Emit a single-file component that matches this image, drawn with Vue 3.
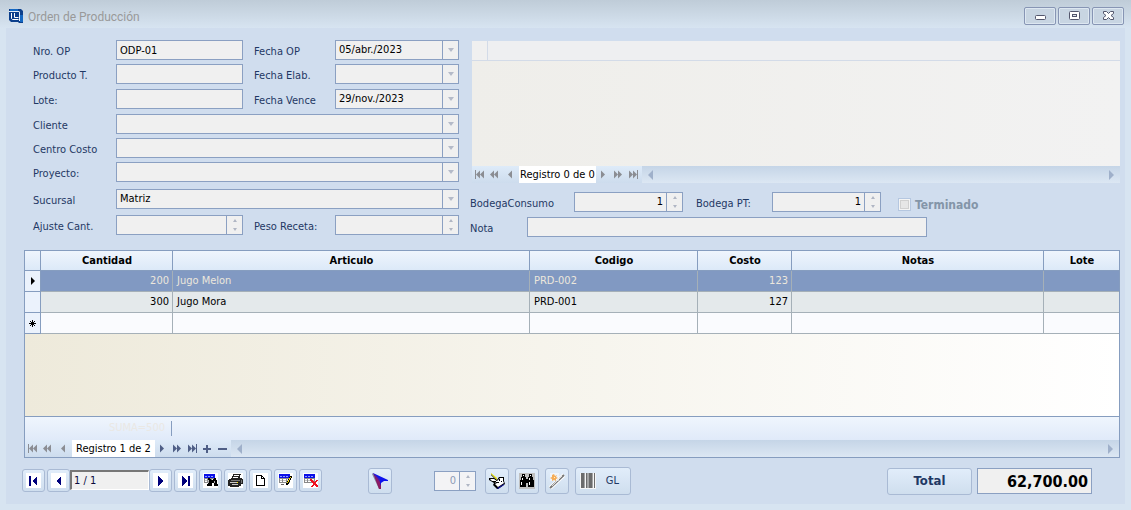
<script setup>
import { ref } from 'vue'

const order = ref({
  number: 'ODP-01',
  product: '',
  lot: '',
  date: '05/abr./2023',
  madeOn: '',
  expires: '29/nov./2023',
  client: '',
  costCenter: '',
  project: '',
  branch: 'Matriz',
  adjust: '',
  weight: '',
  stockOut: '1',
  stockIn: '1',
  note: '',
  position: '1 / 1',
  copies: '0',
  total: '62,700.00'
})

const fields = [
  { key: 'number', label: 'Nro. OP', type: 'text' },
  { key: 'date', label: 'Fecha OP', type: 'combo' },
  { key: 'product', label: 'Producto T.', type: 'text' },
  { key: 'madeOn', label: 'Fecha Elab.', type: 'combo' },
  { key: 'lot', label: 'Lote:', type: 'text' },
  { key: 'expires', label: 'Fecha Vence', type: 'combo' },
  { key: 'client', label: 'Cliente', type: 'combo', wide: true },
  { key: 'costCenter', label: 'Centro Costo', type: 'combo', wide: true },
  { key: 'project', label: 'Proyecto:', type: 'combo', wide: true },
  { key: 'branch', label: 'Sucursal', type: 'combo', wide: true },
  { key: 'adjust', label: 'Ajuste Cant.', type: 'spin' },
  { key: 'weight', label: 'Peso Receta:', type: 'spin' }
]

const rows = [
  { qty: 200, name: 'Jugo Melon', code: 'PRD-002', cost: 123 },
  { qty: 300, name: 'Jugo Mora', code: 'PRD-001', cost: 127 }
]

const navBefore = [
  { name: 'Primero', d: 'M0 0h1v9h-1zM1 4.5l4-4v8zM5 4.5l4-4v8z' },
  { name: 'Página anterior', d: 'M0 4.5l4-4v8zM4 4.5l4-4v8z' },
  { name: 'Anterior', d: 'M3 4.5l4-4v8z' }
]
const navAfter = [
  { name: 'Siguiente', d: 'M6 4.5l-4-4v8z' },
  { name: 'Página siguiente', d: 'M4 4.5l-4-4v8zM8 4.5l-4-4v8z' },
  { name: 'Último', d: 'M4 4.5l-4-4v8zM8 4.5l-4-4v8zM8 0h1v9h-1z' }
]
const navEdit = [
  { name: 'Agregar', d: 'M3 1h2v3h3v2h-3v3h-2v-3h-3v-2h3z' },
  { name: 'Quitar', d: 'M0 4h9v2h-9z' }
]

const navy = '#00007c'
const sheet = [
  { c: '#0a10e8', d: 'M1 1h11v4h-11z' },
  { c: '#8fa0ff', d: 'M2 3h2v1h-2zM5 3h2v1h-2zM8 3h2v1h-2z' },
  { c: '#8a8a8a', d: 'M1 5h11v1h-11zM1 6h1v3h-1zM4 6h1v3h-1zM8 6h1v3h-1zM11 6h1v3h-1zM1 9h11v1h-11z' },
  { c: '#c4c4c4', d: 'M2 7h2v1h-2zM5 7h3v1h-3zM9 7h2v1h-2z' }
]
const moves = [
  { name: 'Primer registro', parts: [{ c: navy, d: 'M3 3h2v10h-2zM11 3v10l-5-5z' }] },
  { name: 'Registro anterior', parts: [{ c: navy, d: 'M10 3v10l-5-5z' }] }
]
const tools = [
  { name: 'Registro siguiente', parts: [{ c: navy, d: 'M5 3v10l6-5z' }] },
  { name: 'Último registro', parts: [{ c: navy, d: 'M4 3v10l5-5zM10 3h2v10h-2z' }] },
  {
    name: 'Buscar',
    parts: [
      ...sheet,
      { c: '#000', d: 'M5 5h2v1h1v1h2v-1h1v-1h2v2h1v4h1v2h-4v-3h-2v3h-5v-2h1v-3h1z' },
      { c: '#aaa', d: 'M5 8h1v2h-1zM11 8h1v2h-1z' }
    ]
  },
  {
    name: 'Imprimir',
    parts: [
      { c: '#222', d: 'M5 1h8v1h-1v3h2v1h1v5h-2v2h-2v1h-9v-1h-2v-6h1v-1h2v-1h1v-2h1z' },
      { c: '#fff', d: 'M6 2h5v1h-5zM5 4h5v1h-5z' },
      { c: '#777', d: 'M3 7h9v1h-9zM13 7h1v3h-1z' },
      { c: '#c8c8c8', d: 'M2 9h8v1h-8zM4 11h6v1h-6z' },
      { c: '#ffe600', d: 'M9 9h1v1h-1z' }
    ]
  },
  {
    name: 'Nuevo',
    parts: [
      { c: '#000', d: 'M3 2h6v1h1v1h1v1h1v8h-9z' },
      { c: '#fff', d: 'M4 3h4v3h3v6h-7zM9 4h1v1h-1z' }
    ]
  },
  {
    name: 'Editar',
    parts: [
      ...sheet,
      { c: '#000', d: 'M12 3h2v2h-1v2h-1v2h-1v2h-1v1h-2v-2h1v-2h1v-2h1v-2h1z' },
      { c: '#f5d800', d: 'M12 4h1v1h-1v2h-1v2h-1v1h-1v-1h1v-2h1v-2h1z' },
      { c: '#666', d: 'M3 11h3v1h-3z' }
    ]
  },
  {
    name: 'Eliminar',
    parts: [
      ...sheet,
      { c: '#f01020', d: 'M7 6h2v1h1v1h1v1h1v-1h1v-1h2v1h-1v1h-1v2h1v1h1v2h-2v-1h-1v-1h-1v1h-1v1h-2v-1h1v-1h1v-2h-1v-1h-1z' }
    ]
  }
]
</script>

<template>
  <main class="window">
    <header class="titlebar">
      <svg class="logo" viewBox="0 0 14 14" aria-hidden="true">
        <path fill="#0c3f8c" d="M0 0h12l2 2v12h-4l-1-1h-7l-2-2z" />
        <path fill="#1467c2" d="M1 0h8v3h-8zM11 6h3v7h-3z" />
        <path fill="#e4eef8" d="M0 3h10v9h1v-9l-1-1h-10z" />
        <path fill="none" stroke="#fff" d="M2.500 4v5.500l1 1h6M5.500 4v4.500h4" />
      </svg>
      <h1>Orden de Producción</h1>
      <div class="window-buttons">
        <button type="button" aria-label="Minimizar">
          <svg viewBox="0 0 13 10"><rect x="1.500" y="4.500" width="10" height="4" rx="1" fill="#fff" stroke="#53566c" /></svg>
        </button>
        <button type="button" aria-label="Maximizar">
          <svg viewBox="0 0 13 10"><rect x="1.500" y=".5" width="10" height="8" rx="1" fill="#fff" stroke="#53566c" /><rect x="4.500" y="3.500" width="4" height="2" fill="#dfe6ee" stroke="#53566c" /></svg>
        </button>
        <button type="button" aria-label="Cerrar">
          <svg viewBox="0 0 13 10"><path fill="#fff" stroke="#53566c" d="M1.500 .5h3l2 2 2-2h3v2l-2.500 2 2.500 2v2h-3l-2-2-2 2h-3v-2l2.500-2-2.500-2z" /></svg>
        </button>
      </div>
    </header>

    <section class="panel">
      <div class="top">
        <form class="fields" @submit.prevent>
          <template v-for="f in fields" :key="f.key">
            <label :for="f.key">{{ f.label }}</label>
            <input v-if="f.type === 'text'" :id="f.key" v-model="order[f.key]" class="box" type="text" />
            <div v-else-if="f.type === 'combo'" class="box combo" :class="{ wide: f.wide }">
              <select :id="f.key" v-model="order[f.key]">
                <option>{{ order[f.key] }}</option>
              </select>
              <span class="drop"></span>
            </div>
            <div v-else class="box spin">
              <input :id="f.key" v-model="order[f.key]" type="text" />
              <span class="steps">
                <button type="button" class="up" aria-label="Aumentar"></button>
                <button type="button" class="down" aria-label="Disminuir"></button>
              </span>
            </div>
          </template>
        </form>

        <div class="side">
          <div class="preview">
            <div class="preview-head"></div>
            <div class="preview-body"></div>
            <div class="navigator">
              <div class="nav-buttons muted">
                <button v-for="b in navBefore" :key="b.name" type="button" :aria-label="b.name">
                  <svg viewBox="0 0 9 9"><path :d="b.d" /></svg>
                </button>
              </div>
              <span class="record">Registro 0 de 0</span>
              <div class="nav-buttons muted">
                <button v-for="b in navAfter" :key="b.name" type="button" :aria-label="b.name">
                  <svg viewBox="0 0 9 9"><path :d="b.d" /></svg>
                </button>
              </div>
              <div class="track"><i class="left"></i><i class="right"></i></div>
            </div>
          </div>

          <div class="stock">
            <label for="stockOut">BodegaConsumo</label>
            <div class="box spin number">
              <input id="stockOut" v-model="order.stockOut" type="text" />
              <span class="steps">
                <button type="button" class="up" aria-label="Aumentar"></button>
                <button type="button" class="down" aria-label="Disminuir"></button>
              </span>
            </div>
            <label class="second" for="stockIn">Bodega PT:</label>
            <div class="box spin number">
              <input id="stockIn" v-model="order.stockIn" type="text" />
              <span class="steps">
                <button type="button" class="up" aria-label="Aumentar"></button>
                <button type="button" class="down" aria-label="Disminuir"></button>
              </span>
            </div>
            <label class="done"><input type="checkbox" disabled />Terminado</label>
          </div>
          <div class="note">
            <label for="note">Nota</label>
            <input id="note" v-model="order.note" class="box" type="text" />
          </div>
        </div>
      </div>

      <div class="grid">
        <table>
          <colgroup>
            <col class="c-mark" /><col class="c-qty" /><col class="c-name" /><col class="c-code" />
            <col class="c-cost" /><col class="c-notes" /><col class="c-lot" />
          </colgroup>
          <thead>
            <tr>
              <th></th><th>Cantidad</th><th>Articulo</th><th>Codigo</th><th>Costo</th><th>Notas</th><th>Lote</th>
            </tr>
          </thead>
          <tbody>
            <tr v-for="(r, i) in rows" :key="r.code" :class="{ selected: i === 0 }">
              <td class="mark">
                <svg v-if="i === 0" viewBox="0 0 9 9"><path d="M3 0l4 4-4 4z" /></svg>
              </td>
              <td class="num">{{ r.qty }}</td>
              <td>{{ r.name }}</td>
              <td>{{ r.code }}</td>
              <td class="num">{{ r.cost }}</td>
              <td></td>
              <td></td>
            </tr>
            <tr class="blank">
              <td class="mark">
                <svg viewBox="0 0 9 9"><path stroke="#000" d="M4.500 1v7M1 4.500h7M2 2l5 5M7 2l-5 5" /></svg>
              </td>
              <td></td><td></td><td></td><td></td><td></td><td></td>
            </tr>
          </tbody>
        </table>
        <div class="empty"></div>
        <div class="summary"><span>SUMA=500</span></div>
        <div class="navigator">
          <div class="nav-buttons muted">
            <button v-for="b in navBefore" :key="b.name" type="button" :aria-label="b.name">
              <svg viewBox="0 0 9 9"><path :d="b.d" /></svg>
            </button>
          </div>
          <span class="record roomy">Registro 1 de 2</span>
          <div class="nav-buttons">
            <button v-for="b in [...navAfter, ...navEdit]" :key="b.name" type="button" :aria-label="b.name">
              <svg viewBox="0 0 9 9"><path :d="b.d" /></svg>
            </button>
          </div>
          <div class="track"><i class="left"></i><i class="right"></i></div>
        </div>
      </div>

      <footer class="toolbar">
        <div class="moves">
          <button v-for="b in moves" :key="b.name" type="button" class="tool" :aria-label="b.name">
            <svg viewBox="0 0 15 15"><path v-for="(p, i) in b.parts" :key="i" :d="p.d" :fill="p.c" /></svg>
          </button>
          <input v-model="order.position" class="position" type="text" aria-label="Posición" />
          <button v-for="b in tools" :key="b.name" type="button" class="tool" :aria-label="b.name">
            <svg viewBox="0 0 15 15"><path v-for="(p, i) in b.parts" :key="i" :d="p.d" :fill="p.c" /></svg>
          </button>
        </div>

        <button type="button" class="action pointer" aria-label="Seleccionar">
          <svg viewBox="0 0 16 16">
            <path fill="#858ba0" d="M0 1l1-1 7 15-1 1z" />
            <path fill="#8b1a5b" d="M1 0l8 8v8h-2z" />
            <path fill="#0c12ee" d="M1 0l15 7v1h-4l-3 2-1 3z" />
            <path fill="#8b1a6b" d="M2 1l6 6v6l-1 1z" />
            <path fill="#3a1ab8" d="M2 1l6 5v3z" />
          </svg>
        </button>

        <div class="box spin number copies">
          <input v-model="order.copies" type="text" aria-label="Copias" />
          <span class="steps">
            <button type="button" class="up" aria-label="Aumentar"></button>
            <button type="button" class="down" aria-label="Disminuir"></button>
          </span>
        </div>

        <div class="actions">
          <button type="button" class="action" aria-label="Firmar">
            <svg viewBox="0 0 16 16">
              <path fill="#000" d="M0 5h5l3 2 2-3h5v4l1 3-4 3-3 2h-1l-4-4 1-2-5-3z" />
              <path fill="#fff" d="M1 6h4l3 2 3-3h3v3l1 2-6 4-3-3 2-1-5-2z" />
              <path fill="#000" d="M3 8h4v1h-4zM7 9h3v1h-3zM10 6h1v2h-1zM12 8h1v1h-1z" />
              <path fill="#15159a" d="M8 15l7-4v1l-6 4z" />
              <path fill="#000" d="M2 1l6 6v1l-6-6z" />
              <path fill="#e9e000" d="M2 0l6 5v2l-6-6z" />
            </svg>
          </button>
          <button type="button" class="action" aria-label="Buscar orden">
            <svg viewBox="0 0 16 16">
              <path fill="#c0c0c0" d="M0 0h16v16h-16z" />
              <path fill="#000" d="M3 1h3v3h1v2h2v-2h1v-3h3v3h1v3h1v7h-6v-4h-2v4h-6v-7h1v-3h1z" />
              <path fill="#fff" d="M4 2h1v1h-1zM11 2h1v1h-1zM3 5h1v2h-1zM10 5h1v2h-1zM2 9h1v3h-1zM10 9h1v3h-1z" />
            </svg>
          </button>
          <button type="button" class="action" aria-label="Asistente">
            <svg viewBox="0 0 16 16">
              <path stroke="#fff" stroke-width="4" d="M1 15l14-13" />
              <path stroke="#777" stroke-width="2" d="M1 15l14-13" />
              <path stroke="#ddd" d="M3 13l10-10" />
              <path fill="#fff" d="M1 0h9v8h-9z" opacity=".5" />
              <path fill="#f5ad59" d="M5 1l1 2 2-1-1 2 2 1-2 1v2l-2-1-2 1v-2l-2-1 2-1v-2z" />
              <path fill="#fff4c8" d="M5 4h1v1h-1z" />
            </svg>
          </button>
          <button type="button" class="action ledger">
            <svg viewBox="0 0 16 16" aria-hidden="true">
              <path fill="#f6f6f6" d="M0 0h16v16h-16z" />
              <path fill="#6c6c6c" d="M1 0h3v15h-3zM6 0h1v15h-1zM9 0h3v15h-3zM14 0h1v15h-1z" />
              <path fill="#a4a4a4" d="M4 0h1v15h-1zM7 0h2v15h-2zM12 0h1v15h-1z" />
            </svg>
            <span>GL</span>
          </button>
        </div>

        <div class="totals">
          <button type="button" class="total-button">Total</button>
          <input v-model="order.total" class="box total-value" type="text" aria-label="Total" />
        </div>
      </footer>
    </section>
  </main>
</template>

<style>
body {
  background: #d7e4f1;
}
</style>

<style scoped>
* {
  box-sizing: border-box;
}
.window {
  min-height: 100vh;
  display: flex;
  flex-direction: column;
  padding: 0 6px 6px;
  background: linear-gradient(#bfccd8, #d7e4f1 28px);
  font: 11px/14px "DejaVu Sans Condensed", "Noto Sans", sans-serif;
  color: #1f3864;
}
button,
input,
select {
  font: inherit;
  color: inherit;
  margin: 0;
}
button {
  padding: 0;
}
.titlebar {
  height: 28px;
  display: flex;
  align-items: center;
  padding: 4px 1px 0 3px;
}
.logo {
  width: 14px;
  height: 14px;
}
h1 {
  margin: 2px 0 0 5px;
  font: 12px/16px Roboto, "Noto Sans", sans-serif;
  color: #999;
}
.window-buttons {
  margin-left: auto;
  display: flex;
  gap: 2px;
}
.window-buttons button {
  width: 32px;
  height: 18px;
  display: flex;
  align-items: center;
  justify-content: center;
  border: 1px solid #8795b4;
  border-radius: 2px;
  background: #c8d5e2;
  box-shadow: inset 0 0 0 1px #dde7f1;
}
.window-buttons svg {
  width: 13px;
  height: 10px;
}
.panel {
  flex: 1;
  background: #d0ddee;
}
.top {
  display: flex;
  gap: 11px;
  padding: 12px 5px 0 27px;
}
.fields {
  display: grid;
  grid-template-columns: 83px 127px 92px 124px;
  grid-template-rows: 24px 25px 25px 24px 24px 27px 26px 20px;
  align-items: start;
}
label {
  line-height: 24px;
  white-space: nowrap;
}
.box {
  height: 20px;
  width: 100%;
  min-width: 0;
  border: 1px solid #8ba0c2;
  border-radius: 0;
  background: #f0f0f0;
  color: #000;
  padding: 0 3px;
}
.fields > input.box + label,
.fields > .spin + label {
  padding-left: 11px;
}
.combo {
  display: grid;
  padding: 0;
}
.wide {
  grid-column: 2 / 5;
}
.combo select,
.combo .drop {
  grid-area: 1 / 1;
}
.combo select {
  appearance: none;
  width: 100%;
  height: 18px;
  border: 0;
  background: none;
  padding: 0 18px 0 3px;
}
.drop {
  justify-self: end;
  width: 16px;
  height: 18px;
  border-left: 1px solid #8ba0c2;
  display: flex;
  align-items: center;
  justify-content: center;
  pointer-events: none;
}
.drop::before {
  content: "";
  border: 3px solid transparent;
  border-top: 4px solid #b4bac8;
  border-bottom: 0;
}
.spin {
  display: flex;
  padding: 0;
}
.spin input {
  flex: 1;
  min-width: 0;
  border: 0;
  background: none;
  padding: 0 3px;
}
.number input {
  text-align: right;
}
.steps {
  width: 16px;
  border-left: 1px solid #8ba0c2;
  display: flex;
  flex-direction: column;
}
.steps button {
  flex: 1;
  border: 0;
  background: none;
  display: flex;
  align-items: center;
  justify-content: center;
}
.steps button::before {
  content: "";
  border: 0 solid transparent;
  border-width: 0 2px;
}
.steps .up::before {
  border-bottom: 3px solid #b0b6c4;
}
.steps .down::before {
  border-top: 3px solid #b0b6c4;
}
.side {
  flex: 1;
  min-width: 0;
}
.preview {
  margin: 1px 0 9px 2px;
}
.preview-head {
  height: 20px;
  background: linear-gradient(90deg, #f0f0f0 15px, #d3dbe8 15px, #d3dbe8 16px, #eeeff1 16px);
  border-bottom: 1px solid #d3dbe8;
}
.preview-body {
  height: 105px;
  background: linear-gradient(90deg, #efeeea, #f2f2f2);
}
.navigator {
  height: 17px;
  display: flex;
  background: linear-gradient(#deebf9, #cddced);
}
.nav-buttons {
  display: flex;
  align-items: center;
  gap: 6px;
  padding: 0 5px 0 3px;
}
.record + .nav-buttons {
  padding: 0 4px 0 3px;
}
.nav-buttons button {
  border: 0;
  background: none;
  display: flex;
}
.nav-buttons svg {
  width: 9px;
  height: 9px;
  fill: #4f5f86;
}
.muted svg {
  fill: #8b8d93;
}
.record {
  background: #fff;
  color: #000;
  line-height: 18px;
  padding: 0 1px;
  white-space: nowrap;
}
.roomy {
  padding: 0 4px;
}
.track {
  flex: 1;
  display: flex;
  align-items: center;
  justify-content: space-between;
  padding: 0 6px;
  background: linear-gradient(#c5d5e7, #dce7f3);
}
.track i {
  border: 5px solid transparent;
}
.track .left {
  border-left: 0;
  border-right: 5px solid #9fb0ca;
}
.track .right {
  border-right: 0;
  border-left: 5px solid #9fb0ca;
}
.stock {
  display: flex;
  height: 25px;
}
.stock > label:first-child {
  width: 104px;
}
.stock .box {
  width: 109px;
}
.stock .second {
  width: 89px;
  padding-left: 13px;
}
.stock .done {
  display: flex;
  align-items: center;
  gap: 4px;
  margin-left: 17px;
  font-weight: bold;
  font-size: 12px;
  color: #8495a8;
}
.done input {
  appearance: none;
  width: 13px;
  height: 13px;
  border: 1px solid #b5c7e0;
  background: #e6e6e6;
  box-shadow: inset 0 0 0 1px #f4f4f4, inset 0 0 0 2px #d0d0d0;
}
.note {
  display: flex;
  height: 20px;
}
.note label {
  width: 57px;
}
.note .box {
  width: 400px;
}
.grid {
  margin: 13px 5px 0 18px;
  border: 1px solid #869dbf;
}
table {
  width: 100%;
  table-layout: fixed;
  border-collapse: separate;
  border-spacing: 0;
  color: #000;
}
.c-mark {
  width: 16px;
}
.c-qty {
  width: 132px;
}
.c-name {
  width: 357px;
}
.c-code {
  width: 168px;
}
.c-cost {
  width: 94px;
}
.c-lot {
  width: 75px;
}
th,
td {
  height: 21px;
  padding: 0 3px 0 4px;
  border-right: 1px solid #a5b0b8;
  border-bottom: 1px solid #a5b0b8;
}
th {
  height: 20px;
  font-weight: bold;
  border-color: #869dbf;
  background: linear-gradient(#eff5fd, #dce9f8);
}
tr > :last-child {
  border-right: 0;
}
td {
  background: #e4e9eb;
}
.num {
  text-align: right;
}
.selected td {
  background: #8199c2;
  color: #ece7dc;
}
.blank td {
  background: #fafbfe;
}
tbody td.mark {
  padding: 0 3px;
  background: #ebf2fc;
  border-color: #869dbf;
}
.mark svg {
  display: block;
  width: 9px;
  height: 9px;
}
.empty {
  height: 82px;
  background: linear-gradient(90deg, #eeeadb, #fff);
}
.summary {
  height: 24px;
  padding-top: 4px;
  border-top: 1px solid #869dbf;
  background: linear-gradient(#eff5fd, #e0eaf9);
}
.summary span {
  display: block;
  width: 147px;
  height: 15px;
  padding-right: 6px;
  border-right: 1px solid #869dbf;
  text-align: right;
  color: #eae8e4;
}
.toolbar {
  display: flex;
  align-items: center;
  padding: 9px 33px 8px 16px;
}
.moves,
.actions,
.totals {
  display: flex;
  align-items: center;
}
.moves {
  gap: 2px;
  padding-bottom: 2px;
}
.tool,
.action,
.total-button {
  display: flex;
  align-items: center;
  justify-content: center;
  border: 1px solid #a9bad4;
  border-radius: 3px;
  background: linear-gradient(#e1edfa, #cfdeee);
}
.tool {
  width: 23px;
  height: 23px;
}
.tool svg {
  width: 15px;
  height: 15px;
  background: #fff;
  shape-rendering: crispEdges;
}
.position {
  width: 79px;
  height: 20px;
  margin: 0 -2px;
  padding: 0 2px;
  border: 1px solid #fff;
  border-top: 2px solid #777;
  border-left: 2px solid #777;
  background: #f0f0f0;
  color: #0a0a3c;
}
.action {
  width: 24px;
  height: 26px;
}
.action svg {
  width: 16px;
  height: 16px;
}
.pointer {
  margin-left: 46px;
}
.copies {
  width: 42px;
  margin-left: 42px;
  background: #f3f3f5;
  color: #8d9bb5;
}
.actions {
  gap: 6px;
  margin-left: 9px;
}
.actions .ledger {
  width: 56px;
  height: 28px;
  padding: 0 11px 0 4px;
  justify-content: space-between;
}
.totals {
  margin-left: auto;
  gap: 5px;
}
.total-button {
  width: 85px;
  height: 27px;
  font-weight: bold;
  font-size: 13px;
}
.total-value {
  width: 115px;
  height: 26px;
  text-align: right;
  font-weight: bold;
  font-size: 16px;
}
</style>
